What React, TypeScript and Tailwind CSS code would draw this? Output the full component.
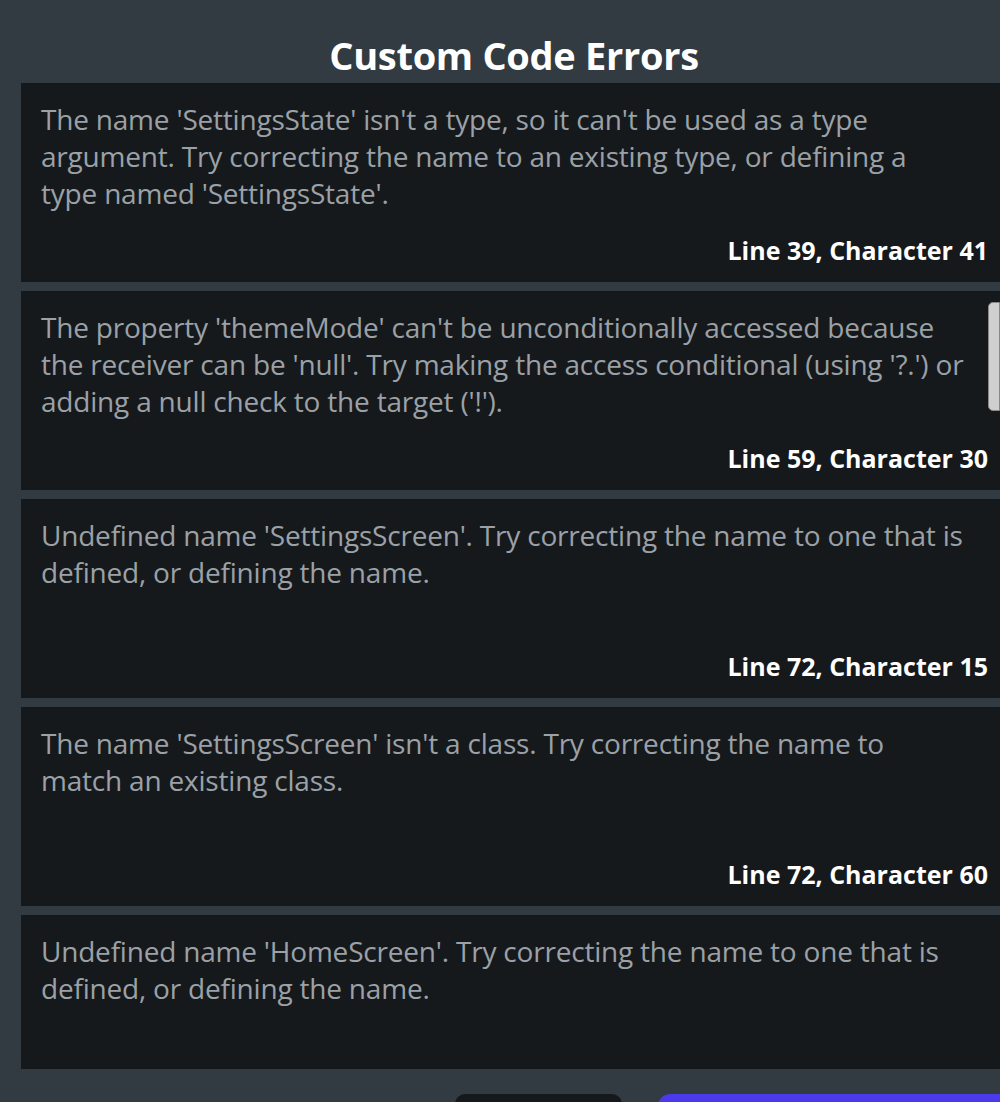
const errors = [
  {
    message:
      "The name 'SettingsState' isn't a type, so it can't be used as a type argument. Try correcting the name to an existing type, or defining a type named 'SettingsState'.",
    location: 'Line 39, Character 41',
  },
  {
    message:
      "The property 'themeMode' can't be unconditionally accessed because the receiver can be 'null'. Try making the access conditional (using '?.') or adding a null check to the target ('!').",
    location: 'Line 59, Character 30',
  },
  {
    message:
      "Undefined name 'SettingsScreen'. Try correcting the name to one that is defined, or defining the name.",
    location: 'Line 72, Character 15',
  },
  {
    message:
      "The name 'SettingsScreen' isn't a class. Try correcting the name to match an existing class.",
    location: 'Line 72, Character 60',
  },
  {
    message:
      "Undefined name 'HomeScreen'. Try correcting the name to one that is defined, or defining the name.",
    location: '',
  },
]

export default function App() {
  return (
    <div
      className="relative h-[1102px] w-[1000px] overflow-hidden bg-[#323a42]"
      style={{ fontFamily: '"Open Sans", "Noto Sans", sans-serif' }}
    >
      <div className="flex h-[83px] items-end justify-center pb-[4px] pl-[28px]">
        <h1 className="text-[38px] font-bold leading-[48px] tracking-[-0.3px] text-white">
          Custom Code Errors
        </h1>
      </div>

      {/* list is scrolled, the last card runs under the footer */}
      <div className="relative h-[986px] overflow-hidden pl-[21px]">
        <div className="flex flex-col gap-[9px]">
          {errors.map((e) => (
            <div
              key={e.message}
              className="flex h-[199px] flex-col justify-between bg-[#15191c] pb-[17px] pl-[20px] pr-[12px] pt-[18px]"
            >
              <p className="w-[925px] text-[28px] leading-[37px] tracking-[-0.2px] text-[#9ba1a7]">
                {e.message}
              </p>
              {e.location && (
                <p className="text-right text-[25px] font-bold leading-[30px] text-white">
                  {e.location}
                </p>
              )}
            </div>
          ))}
        </div>
        {/* scrollbar thumb */}
        <div className="absolute right-0 top-[219px] h-[109px] w-[12px] rounded-l-[5px] border border-[#888] bg-[#cfcfcf]" />
      </div>

      <div className="flex h-[33px] items-start gap-[36px] pl-[455px] pt-[25px]">
        <div className="h-[20px] w-[167px] rounded-t-[10px] bg-[#15191c]" />
        <div className="h-[20px] flex-1 rounded-tl-[12px] bg-[#4b3aeb]" />
      </div>
    </div>
  )
}
